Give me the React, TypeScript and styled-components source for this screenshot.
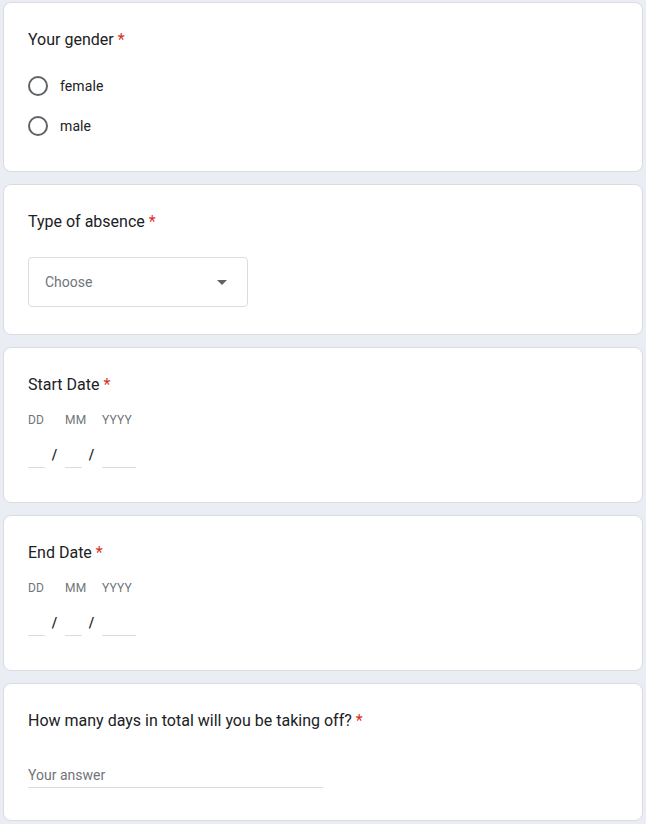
import React from "react";
import styled, { createGlobalStyle } from "styled-components";

const Global = createGlobalStyle`
  html, body { margin: 0; padding: 0; background: #ebedf5; }
  body { font-family: Roboto, "Liberation Sans", Arial, sans-serif; color: #202124; }
  * { box-sizing: border-box; }
`;

const Page = styled.div`
  display: flex;
  flex-direction: column;
  gap: 12px;
  padding: 2px 3px 4px 3px;
`;

const Card = styled.section<{ $pb?: number }>`
  background: #fff;
  border: 1px solid #dadce0;
  border-radius: 8px;
  padding: 25px 24px ${(p) => p.$pb ?? 24}px 24px;
  display: flex;
  flex-direction: column;
  align-items: flex-start;
`;

const Title = styled.div`
  font-size: 16px;
  line-height: 24px;
  color: #202124;
`;

const Req = styled.span`
  color: #d93025;
  margin-left: 4px;
`;

const Options = styled.div`
  display: flex;
  flex-direction: column;
  margin-top: 14px;
`;

const Option = styled.label`
  display: flex;
  align-items: center;
  height: 40px;
  gap: 12px;
  font-size: 14px;
  letter-spacing: 0.1px;
  color: #202124;
`;

const Radio = styled.span`
  width: 20px;
  height: 20px;
  border: 2px solid #5f6368;
  border-radius: 50%;
  display: inline-block;
`;

const Select = styled.div`
  margin-top: 23px;
  width: 220px;
  height: 50px;
  border: 1px solid #dadce0;
  border-radius: 4px;
  display: flex;
  align-items: center;
  justify-content: space-between;
  padding: 0 20px 0 16px;
  font-size: 14px;
  color: #70757a;
`;

const Arrow = styled.span`
  width: 0;
  height: 0;
  border-left: 5px solid transparent;
  border-right: 5px solid transparent;
  border-top: 5px solid #5f6368;
`;

const DateRow = styled.div`
  display: flex;
  margin-top: 15px;
`;

const DateCol = styled.div`
  display: flex;
  flex-direction: column;
`;

const DateLabel = styled.div`
  font-size: 12px;
  line-height: 16px;
  letter-spacing: 0.2px;
  color: #70757a;
  height: 16px;
`;

const DateInputs = styled.div`
  display: flex;
  align-items: flex-end;
  margin-top: 15px;
  height: 25px;
`;

const Field = styled.div<{ $w: number }>`
  width: ${(p) => p.$w}px;
  height: 25px;
  border-bottom: 1px solid #dadce0;
`;

const Slash = styled.div`
  width: 20px;
  padding-right: 1px;
  text-align: center;
  font-size: 14px;
  line-height: 24px;
  height: 25px;
  color: #202124;
  font-weight: 500;
`;

const Answer = styled.div`
  margin-top: 30px;
  width: 295px;
  height: 25px;
  border-bottom: 1px solid #dadce0;
  font-size: 14px;
  line-height: 24px;
  color: #70757a;
`;

const DateQuestion = ({ title }: { title: string }) => (
  <Card $pb={34}>
    <Title>
      {title}
      <Req>*</Req>
    </Title>
    <DateRow>
      <DateCol>
        <DateLabel>DD</DateLabel>
        <DateInputs>
          <Field $w={17} />
          <Slash>/</Slash>
        </DateInputs>
      </DateCol>
      <DateCol>
        <DateLabel>MM</DateLabel>
        <DateInputs>
          <Field $w={17} />
          <Slash>/</Slash>
        </DateInputs>
      </DateCol>
      <DateCol>
        <DateLabel>YYYY</DateLabel>
        <DateInputs>
          <Field $w={34} />
        </DateInputs>
      </DateCol>
    </DateRow>
  </Card>
);

export default function App() {
  return (
    <>
      <Global />
      <Page>
        <Card $pb={25}>
          <Title>
            Your gender<Req>*</Req>
          </Title>
          <Options>
            <Option>
              <Radio />
              female
            </Option>
            <Option>
              <Radio />
              male
            </Option>
          </Options>
        </Card>
        <Card $pb={27}>
          <Title>
            Type of absence<Req>*</Req>
          </Title>
          <Select>
            Choose
            <Arrow />
          </Select>
        </Card>
        <DateQuestion title="Start Date" />
        <DateQuestion title="End Date" />
        <Card $pb={32}>
          <Title>
            How many days in total will you be taking off?<Req>*</Req>
          </Title>
          <Answer>Your answer</Answer>
        </Card>
      </Page>
    </>
  );
}
